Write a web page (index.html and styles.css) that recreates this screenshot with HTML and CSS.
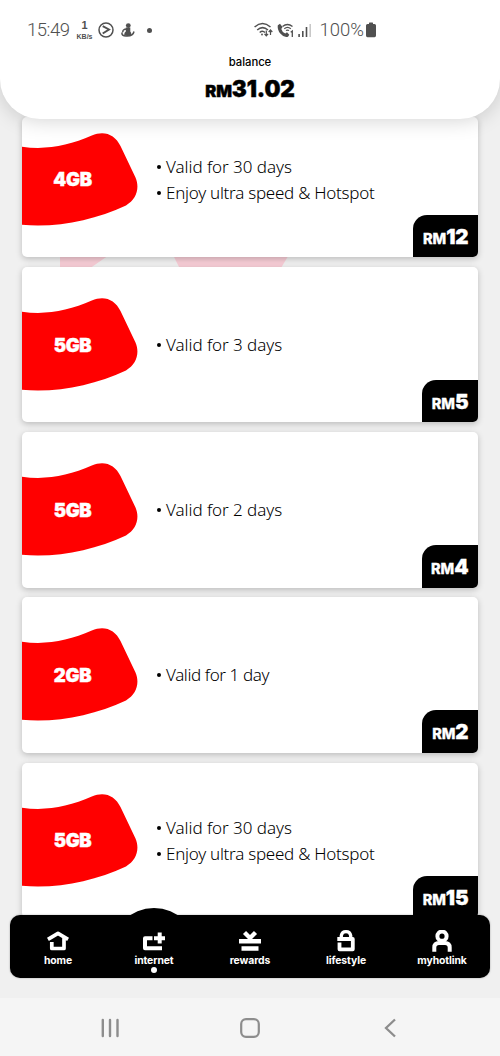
FILE: index.html
```html
<!DOCTYPE html>
<html lang="en">
<head>
<meta charset="utf-8">
<title>Hotlink internet passes</title>
<link rel="stylesheet" href="styles.css">
</head>
<body>
<svg class="defs" width="0" height="0">
  <symbol id="blob" viewBox="0 0 116 126"><path fill="#f00" d="M0 44.700C24 48.300 47 43.500 69.800 33.600C82 28 93 32.500 98.500 44L113.500 75.500C118 86 114.500 97.500 104 103.400C72 118 36 126 0 122.800Z"/></symbol>
</svg>
<div class="screen">
  <header class="header">
    <div class="status">
      <div class="status-left">
        <span class="time">15:49</span>
        <span class="speed"><b>1</b><small>KB/s</small></span>
        <svg class="play" width="16" height="16" viewBox="0 0 16 16" fill="none" stroke="#505050"><circle cx="8" cy="8" r="7" stroke-width="1.500"/><path d="M4.700 4.200L11 7.500L4.700 11.500" stroke-width="1.900"/></svg>
        <svg class="figure" width="14" height="14" viewBox="0 0 14 14" fill="#505050"><circle cx="7.300" cy="2.600" r="2.400"/><path d="M4.800 4.500h4.500v4q1.300 1.300 1 3.500q-3.800 2.200-7 0q-.3-2.500 1.500-3.500z"/><path d="M6 6Q1 6.300 2 9.300M1 9.500Q.5 13 5 13q7 .5 8-4.500" fill="none" stroke="#505050" stroke-width="1.500"/></svg>
        <i class="dot"></i>
      </div>
      <div class="status-right">
        <svg width="19" height="16" viewBox="0 0 19 16" fill="none" stroke="#505050" stroke-width="1.500"><path d="M.6 5Q8.500-2 16.500 5M3.200 8Q8.500 3.200 14 8M5.700 10.500Q8.500 8 11 10.500"/><circle cx="8" cy="12.500" r=".9" fill="#505050" stroke="none"/><path d="M12.300 8.500v5M10.500 11.800l1.800 2 1.800-2M16.500 13V8.500M14.700 10l1.800-2 1.800 2" stroke-width="1.200"/></svg>
        <svg width="17" height="15" viewBox="0 0 17 15" fill="none" stroke="#505050"><path fill="#505050" stroke="none" d="M.8 2.200L3 .8L5.500 4L4.300 6Q5 9 8.300 10.400L10 9.200L12.300 11.800L11 13.700Q7 15 3.300 10.500Q0 6.500.8 2.200Z"/><path d="M5.500 3.500Q10.500-.5 15.500 3.500M7.300 5.700Q10.500 3 13.800 5.700M9 7.600Q10.500 6.500 12 7.600" stroke-width="1.300"/><path d="M13.700 9.200L15.300 8v6" stroke-width="1.300"/></svg>
        <svg width="14" height="15" viewBox="0 0 14 15" fill="#505050"><path d="M.3 11h1.600v3H.3zM4 8h1.600v6H4zM7.700 4h1.600v10H7.700z"/><path fill="#c8c8c8" d="M11.400 1H13v13h-1.600z"/></svg>
        <span class="percent">100%</span>
        <svg width="10" height="16" viewBox="0 0 10 16" fill="#505050"><path d="M3 1Q3 .5 3.500.5h3Q7 .5 7 1v1h1.500Q10 2 10 3.500v10Q10 15.200 8.500 15.200h-7Q0 15.200 0 13.500v-10Q0 2 1.500 2H3z"/></svg>
      </div>
    </div>
    <div class="label">balance</div>
    <div class="balance"><span class="cur">RM</span><span>31.02</span></div>
  </header>

  <main class="list">
    <svg class="backdrop" width="240" height="20" viewBox="0 0 240 20" fill="#f7cdd6"><path d="M0 0H52L26 18H0zM112 0H230L218 20H122z"/></svg>
    <article class="card first"><svg class="blob"><use href="#blob"/></svg><span class="data">4GB</span><ul class="features"><li>Valid for 30 days</li><li class="long">Enjoy ultra speed &amp; Hotspot</li></ul><div class="price two"><small>RM</small><b>12</b></div></article>
    <article class="card"><svg class="blob"><use href="#blob"/></svg><span class="data">5GB</span><ul class="features"><li>Valid for 3 days</li></ul><div class="price"><small>RM</small><b>5</b></div></article>
    <article class="card"><svg class="blob"><use href="#blob"/></svg><span class="data">5GB</span><ul class="features"><li>Valid for 2 days</li></ul><div class="price"><small>RM</small><b>4</b></div></article>
    <article class="card"><svg class="blob"><use href="#blob"/></svg><span class="data">2GB</span><ul class="features"><li class="single">Valid for 1 day</li></ul><div class="price"><small>RM</small><b>2</b></div></article>
    <article class="card"><svg class="blob"><use href="#blob"/></svg><span class="data">5GB</span><ul class="features"><li>Valid for 30 days</li><li class="long">Enjoy ultra speed &amp; Hotspot</li></ul><div class="price two"><small>RM</small><b>15</b></div></article>
  </main>

  <nav class="tabs">
    <a class="tab"><svg width="22" height="22" viewBox="0 0 22 22" fill="none" stroke="#fff" stroke-width="3.700"><path d="M.9 9.300L11 3.300L21.100 9.300M4.800 12V18.500H17V8" stroke-linejoin="round"/></svg><span>home</span></a>
    <a class="tab active"><svg width="22" height="22" viewBox="0 0 22 22" fill="none" stroke="#fff" stroke-width="4"><path d="M9.500 8.200H2V18.300H19M11 8.200H22M16.700 2.500V13.500" stroke-linejoin="round"/></svg><span>internet</span></a>
    <a class="tab"><svg width="22" height="22" viewBox="0 0 22 22" fill="none" stroke="#fff"><path d="M0 11.300H22M2.500 18.500H19.500" stroke-width="4.500"/><path d="M5.500 2.500L11 8L16.500 2.500" stroke-width="4.300"/></svg><span>rewards</span></a>
    <a class="tab"><svg width="22" height="22" viewBox="0 0 22 22" fill="none" stroke="#fff" stroke-width="3.800"><path d="M2.300 9H17.800V19.300H4.500V12.500" stroke-linejoin="round"/><path d="M6.300 9V5.500Q7 1.700 11 1.700T15.700 5.500V9" stroke-width="3.300"/></svg><span>lifestyle</span></a>
    <a class="tab"><svg width="22" height="22" viewBox="0 0 22 22" fill="none" stroke="#fff" stroke-width="4"><circle cx="11" cy="6.200" r="4.600"/><path d="M3.300 21.800V17.500Q3.300 13 8 13H14Q18.700 13 18.700 17.500V21.800"/></svg><span>myhotlink</span></a>
  </nav>

  <footer class="system">
    <svg width="20" height="20" viewBox="0 0 20 20" stroke="#8d8d8d" stroke-width="2.400" stroke-linecap="round"><path d="M2.800 2v16M10 2v16M17.500 2v16"/></svg>
    <svg width="20" height="20" viewBox="0 0 20 20" fill="none" stroke="#8d8d8d" stroke-width="2.200"><rect x="1.200" y="1.200" width="17.600" height="17.600" rx="4.800"/></svg>
    <svg width="20" height="20" viewBox="0 0 20 20" fill="none" stroke="#8d8d8d" stroke-width="2.300"><path d="M15 1.500L6 10L15 18.500"/></svg>
  </footer>
</div>
</body>
</html>
```
FILE: styles.css
```css
* { box-sizing: border-box; }
body { margin: 0; background: #f0f0f0; }
.defs { position: absolute; }
.screen { width: 500px; height: 1056px; overflow: hidden; display: flex; flex-direction: column; font-family: Inter, "Liberation Sans", sans-serif; color: #000; position: relative; }
.header { height: 119px; flex: none; background: #fff; border-radius: 0 0 40px 40px; box-shadow: 0 2px 20px rgba(0,0,0,.17); position: relative; z-index: 2; display: flex; flex-direction: column; align-items: center; }
.status { width: 100%; height: 54px; padding: 17px 123px 0 27px; display: flex; justify-content: space-between; color: #505050; font-family: Roboto, sans-serif; font-weight: 300; }
.status-left, .status-right { display: flex; align-items: center; height: 26px; }
.time { font-size: 18.500px; width: 43px; letter-spacing: -.45px; font-weight: 350; }
.speed { width: 17px; margin: 0 5px 0 6px; display: flex; flex-direction: column; align-items: center; font-family: "Liberation Sans", sans-serif; }
.speed b { font-size: 11px; line-height: 13px; font-weight: 700; }
.speed small { font-size: 7px; line-height: 9px; font-weight: 700; }
.figure { margin-left: 7px; }
.dot { width: 5px; height: 5px; border-radius: 50%; background: #505050; margin-left: 12px; }
.status-right { gap: 4px; }
.status-right svg { position: relative; left: -1px; }
.percent { font-size: 18.500px; margin: 0 -1px 0 3px; font-weight: 350; }
.label { font-size: 11.300px; font-weight: 500; line-height: 16px; letter-spacing: -.05px; }
.balance { margin-top: 6px; font-size: 22.500px; line-height: 26px; font-weight: 900; letter-spacing: -.1px; -webkit-text-stroke: .4px #000; }
.cur { font-size: 16.500px; }
.list { flex: none; height: 796px; padding: 0 22px; margin-top: -2px; display: flex; flex-direction: column; gap: 9.800px; position: relative; }
.backdrop { position: absolute; left: 60px; top: 136px; }
.card { height: 155.500px; flex: none; position: relative; overflow: hidden; background: #fff; border-radius: 5px; box-shadow: 0 2px 6px rgba(0,0,0,.22); display: grid; grid-template-columns: 135px 1fr; align-items: center; }
.card.first { height: 140px; align-items: end; }
.blob { position: absolute; left: 0; bottom: 29.500px; width: 116px; height: 126px; }
.data { color: #fff; font-size: 18.500px; line-height: 24px; font-weight: 900; text-align: center; letter-spacing: -.3px; width: 101px; -webkit-text-stroke: .4px #fff; position: relative; }
.features { margin: 0; padding: 0; list-style: none; font-family: "Noto Sans", sans-serif; font-weight: 300; font-size: 17px; line-height: 25.700px; letter-spacing: -.05px; }
.features li { display: flex; align-items: center; gap: 5px; }
.features .long { letter-spacing: -.26px; }
.features .single { letter-spacing: -.4px; }
.features li::before { content: ""; width: 4px; height: 4px; border-radius: 50%; background: #000; }
.first .data { margin-bottom: 65.700px; }
.first .features { margin-bottom: 51.300px; }
.card:last-child .features { padding-top: 1px; }
.price { position: absolute; right: 0; bottom: 0; width: 56.500px; height: 42.500px; background: #000; color: #fff; border-radius: 14px 0 0; padding: 9px 9.500px 0 0; text-align: right; line-height: 26px; letter-spacing: -.1px; white-space: nowrap; -webkit-text-stroke: .3px #fff; }
.price.two { width: 65.500px; }
.price small { font-size: 14.500px; font-weight: 800; }
.price b { font-size: 20.500px; font-weight: 900; }
.tabs { position: relative; z-index: 1; margin: 1.500px 10px 0; height: 63.500px; flex: none; background: #000; border-radius: 10px; display: grid; grid-template-columns: repeat(5, 1fr); box-shadow: 0 0 2px rgba(0,0,0,.35); }
.tab { display: flex; flex-direction: column; align-items: center; padding-top: 15px; color: #fff; font-size: 10.400px; line-height: 13px; font-weight: 700; letter-spacing: -.1px; position: relative; }
.tab span { margin-top: 2.500px; position: relative; }
.tab svg { position: relative; }
.active::before { content: ""; position: absolute; top: -7px; left: 5px; width: 86px; height: 86px; border-radius: 50%; background: #000; clip-path: inset(0 0 60% 0); }
.active::after { content: ""; width: 6px; height: 6px; border-radius: 50%; background: #fff; margin-top: 0; flex: none; }
.system { margin-top: auto; height: 58.500px; flex: none; background: #f5f5f5; padding: 3px 100px 0; display: flex; justify-content: space-between; align-items: center; }
```
